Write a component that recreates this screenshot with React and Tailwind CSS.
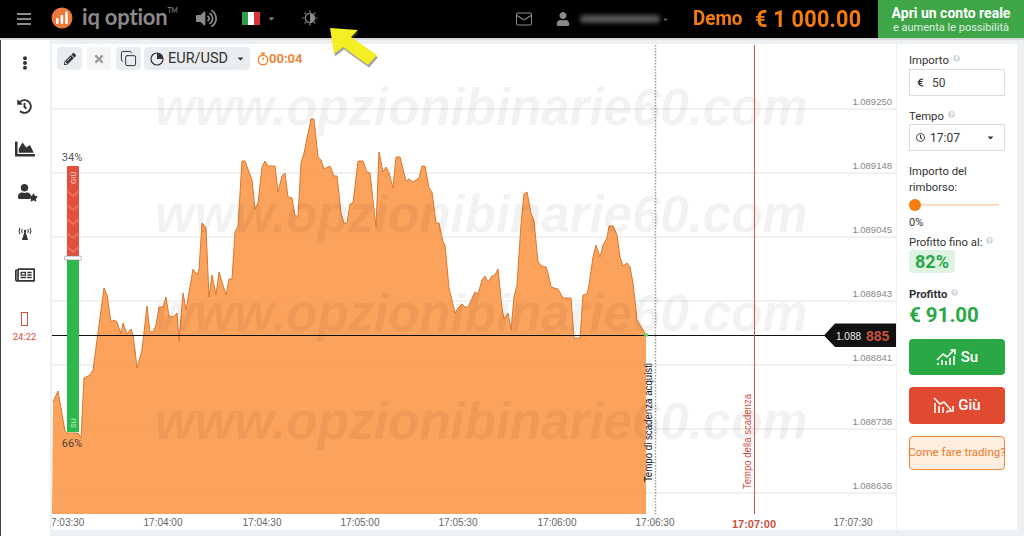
import React from "react";
import { Mail, Copy } from "lucide-react";
import {
  FaPencilAlt,
  FaTimes,
  FaUser,
  FaStar,
  FaHistory,
  FaChartArea,
  FaRegNewspaper,
  FaEllipsisV,
  FaRegClock,
  FaEuroSign,
  FaCaretDown,
  FaQuestionCircle,
  FaVolumeUp,
} from "react-icons/fa";

const PRICE_LINE =
  "53,402 58,391 65,431 67,433 78,433 81,438 84,378 90,375 93,370 97,340 100,318 104,288 107,295 111,322 114,320 117,322 121,334 123,323 127,334 131,329 133,335 135,350 137,368 142,350 147,306 150,332 153,332 156,325 159,307 163,307 166,297 169,316 173,317 177,313 179,341 183,293 186,310 193,269 197,275 199,270 202,223 206,228 209,297 212,275 216,295 219,272 222,282 226,295 229,279 232,279 235,232 238,226 242,161 245,161 252,180 255,209 258,203 262,167 265,161 268,166 275,166 278,192 282,176 285,173 288,197 292,198 295,216 298,216 301,163 304,153 311,119 314,119 318,157 321,160 324,169 330,166 334,176 337,176 341,213 344,223 347,223 350,204 353,203 358,161 363,161 367,172 370,173 376,227 379,152 383,172 386,167 389,173 393,188 396,157 400,157 406,181 409,179 413,182 419,178 422,166 425,166 429,188 432,192 436,223 439,223 443,242 445,245 449,288 455,313 459,307 462,304 465,307 468,307 475,292 478,294 482,280 485,276 488,282 492,276 495,275 498,269 502,308 504,319 508,313 511,330 514,297 517,285 521,224 524,194 527,192 531,213 534,221 538,262 542,266 546,267 548,273 551,287 554,288 558,289 563,298 571,298 574,338 580,338 583,295 587,294 589,285 593,257 596,245 600,257 603,245 607,238 609,226 613,226 617,235 620,257 623,266 627,263 630,267 633,283 637,320 646,335";

const GRID = [
  { y: 109, label: "1.089250" },
  { y: 173, label: "1.089148" },
  { y: 237, label: "1.089045" },
  { y: 301, label: "1.088943" },
  { y: 365, label: "1.088841" },
  { y: 429, label: "1.088738" },
  { y: 493, label: "1.088636" },
];

const TIMES = [
  { x: 163, label: "17:04:00" },
  { x: 262, label: "17:04:30" },
  { x: 360, label: "17:05:00" },
  { x: 458, label: "17:05:30" },
  { x: 557, label: "17:06:00" },
  { x: 655, label: "17:06:30" },
  { x: 853, label: "17:07:30" },
];

const WATERMARK_ROWS = [125, 232, 331, 439];

function Hint() {
  return <FaQuestionCircle className="inline-block w-[7px] h-[7px] text-gray-300 ml-1 -translate-y-[3px]" />;
}

function Header() {
  return (
    <div className="h-[38px] shrink-0 bg-black flex items-center relative">
      {/* menu */}
      <div className="ml-[17px] w-[14px] flex flex-col gap-[3px] shrink-0">
        <div className="h-[2px] bg-[#8c8c8c]"></div>
        <div className="h-[2px] bg-[#8c8c8c]"></div>
        <div className="h-[2px] bg-[#8c8c8c]"></div>
      </div>

      {/* logo */}
      <svg className="ml-[20px] -mt-[2px] shrink-0" width="22" height="22" viewBox="0 0 22 22">
        <circle cx="11" cy="11" r="10.5" fill="#ea7a3c" />
        <rect x="5" y="11" width="2.6" height="6" rx="1" fill="#fff" />
        <rect x="9.6" y="8" width="2.6" height="9" rx="1" fill="#fff" />
        <rect x="14.2" y="4.5" width="2.6" height="12.5" rx="1" fill="#fff" />
      </svg>
      <div className="ml-[9px] -mt-[5px] font-['Lato',sans-serif] font-bold text-[22px] leading-none tracking-[-0.2px] text-[#8a8a8a] flex w-[90px] shrink-0 whitespace-nowrap">
        iq option<span className="text-[7px] font-normal mt-[1px]">TM</span>
      </div>

      <FaVolumeUp className="ml-[24px] -mt-[2px] text-[#8a8a8a] shrink-0" size={21} />

      {/* flag */}
      <div className="ml-[25px] -mt-[2px] flex w-[18px] h-[13px] shrink-0">
        <div className="flex-1 bg-[#2f9e4f]"></div>
        <div className="flex-1 bg-white"></div>
        <div className="flex-1 bg-[#d8353b]"></div>
      </div>
      <FaCaretDown className="ml-[7px] -mt-[2px] text-[#8a8a8a] shrink-0" size={9} />

      {/* brightness */}
      <svg className="ml-[26px] -mt-[2px] shrink-0" width="16" height="16" viewBox="0 0 16 16">
        <circle cx="8" cy="8" r="4.6" fill="none" stroke="#8a8a8a" strokeWidth="1.2" />
        <path d="M8 3.4a4.6 4.6 0 0 1 0 9.2z" fill="#8a8a8a" />
        <path d="M8 0.5v2M8 13.5v2M2.6 2.6l1.4 1.4M12 12l1.4 1.4M13.4 2.6L12 4M4 12l-1.4 1.4M0.5 8h2M13.5 8h2" stroke="#8a8a8a" strokeWidth="1.2" />
      </svg>

      <div className="flex-1"></div>

      <Mail className="-mt-[1px] text-[#8a8a8a] shrink-0" size={18} strokeWidth={1.4} />
      <FaUser className="ml-[23px] -mt-[1px] text-[#8a8a8a] shrink-0" size={14} />
      <div className="ml-[10px] -mt-[1px] w-[80px] h-[8px] rounded-sm bg-[#555] blur-[2px] shrink-0"></div>
      <FaCaretDown className="ml-[2px] text-[#777] shrink-0" size={7} />

      <div className="ml-[24px] w-[50px] -mt-[1px] font-bold text-[#f47b0e] text-[21px] whitespace-nowrap origin-left scale-x-90 shrink-0">Demo</div>
      <div className="ml-[12px] w-[107px] -mt-[1px] font-bold text-[#f47b0e] text-[24px] tracking-[0.3px] whitespace-nowrap origin-left scale-x-90 shrink-0">€ 1 000.00</div>

      {/* conto reale */}
      <div className="ml-[16px] w-[146px] h-[38px] shrink-0 bg-[#3fa648] text-white flex flex-col items-center justify-center">
        <div className="text-[14px] font-bold leading-[16px] whitespace-nowrap">Apri un conto reale</div>
        <div className="text-[11px] leading-[13px] text-[#dff1e0] whitespace-nowrap">e aumenta le possibilità</div>
      </div>
    </div>
  );
}

function Rail() {
  return (
    <div className="w-[50px] shrink-0 bg-white border-l border-[#444] flex flex-col items-center text-[#333] pt-[16px] pr-[2px]">
      <FaEllipsisV size={14} />
      <FaHistory className="mt-[29px]" size={15} />
      <FaChartArea className="mt-[25px]" size={20} />
      <div className="mt-[25px] relative w-[20px] h-[18px] ml-[4px]">
        <FaUser size={15} />
        <FaStar className="absolute -right-[1px] bottom-0" size={9} />
      </div>
      <svg className="mt-[25px]" width="14" height="13" viewBox="0 0 14 13" fill="none" stroke="#333">
        <path d="M7 5L4.5 12.5h5z" fill="#333" />
        <circle cx="7" cy="4" r="1.2" fill="#333" stroke="none" />
        <path d="M4.3 2a3.6 3.6 0 0 0 0 4M9.7 2a3.6 3.6 0 0 1 0 4M2 0.8a6 6 0 0 0 0 6.4M12 0.8a6 6 0 0 1 0 6.4" strokeWidth="1" />
      </svg>
      <FaRegNewspaper className="mt-[25px]" size={20} />
      <div className="mt-[27px] w-[7px] h-[14px] border border-[#d9503f]"></div>
      <div className="mt-[6px] text-[9.5px] leading-none text-[#d9503f]">24:22</div>
    </div>
  );
}

function Toolbar() {
  return (
    <div className="absolute left-[5px] top-[3px] flex items-center h-[23px] text-[#333]">
      <div className="w-[25px] h-[23px] rounded-sm bg-[#e9edf0] flex items-center justify-center">
        <FaPencilAlt size={12} />
      </div>
      <div className="ml-[5px] w-[24px] h-[23px] rounded-sm bg-[#f3f5f6] flex items-center justify-center text-[#999]">
        <FaTimes size={12} />
      </div>
      <div className="ml-[5px] w-[25px] h-[23px] rounded-sm bg-[#e9edf0] flex items-center justify-center">
        <Copy size={17} strokeWidth={1.4} />
      </div>
      <div className="ml-[3px] w-[106px] h-[23px] rounded-sm bg-[#e9edf0] flex items-center pl-[6px]">
        <svg width="14" height="14" viewBox="0 0 14 14">
          <circle cx="7" cy="7" r="6" fill="none" stroke="#333" strokeWidth="1.2" />
          <path d="M7 7V1a6 6 0 0 1 6 6z" fill="#333" />
        </svg>
        <span className="ml-[4px] text-[14.5px]">EUR/USD</span>
        <FaCaretDown className="ml-[8px]" size={9} />
      </div>
      <div className="ml-[7px] flex items-center text-[#f0883a] font-bold text-[13px]">
        <svg width="12" height="14" viewBox="0 0 12 14">
          <circle cx="6" cy="8" r="4.8" fill="none" stroke="#f0883a" strokeWidth="1.4" />
          <path d="M4 1.2h4M6 1.2v2M6 8V5.5" stroke="#f0883a" strokeWidth="1.4" fill="none" />
        </svg>
        <span>00:04</span>
      </div>
    </div>
  );
}

function Chart() {
  return (
    <div className="w-[844px] h-full bg-white relative shrink-0 overflow-hidden">
      <svg className="absolute inset-0" width="844" height="486" viewBox="52 44 844 486">
        {GRID.map((g) => (
          <line key={g.y} x1="52" x2="897" y1={g.y} y2={g.y} stroke="#e3e3e3" strokeWidth="1" />
        ))}
        <polygon points={`52,514 ${PRICE_LINE} 646,514`} fill="#fb9a4e" fillOpacity="0.92" />
        <polyline points={PRICE_LINE} fill="none" stroke="#d9782f" strokeWidth="1" />
        {WATERMARK_ROWS.map((y) => (
          <text
            key={y}
            x="155"
            y={y}
            fontFamily="'Liberation Sans', sans-serif"
            fontWeight="bold"
            fontStyle="italic"
            fontSize="51"
            fill="#000"
            fillOpacity="0.05"
          >
            www.opzionibinarie60.com
          </text>
        ))}
        {GRID.map((g) => (
          <text key={g.label} x="892" y={g.y - 4} textAnchor="end" fontSize="9.5" fill="#888" fontFamily="'Liberation Sans', sans-serif">
            {g.label}
          </text>
        ))}

        {/* lines */}
        <line x1="52" x2="830" y1="335.5" y2="335.5" stroke="#111" strokeWidth="1" />
        <line x1="655.5" x2="655.5" y1="45" y2="514" stroke="#999" strokeWidth="1.5" strokeDasharray="1.5 1.5" />
        <line x1="754.5" x2="754.5" y1="45" y2="514" stroke="#d4553f" strokeWidth="1" />
        <circle cx="646" cy="335" r="2" fill="#54e05c" />

        {/* price tag */}
        <polygon points="824,335.5 835,323.5 897,323.5 897,347 835,347" fill="#111" />
        <text x="836" y="340" fontSize="10" fill="#eee" fontFamily="'Liberation Sans', sans-serif">1.088</text>
        <text x="866" y="341" fontSize="14" fontWeight="bold" fill="#c9503f" fontFamily="'Liberation Sans', sans-serif">885</text>

        {/* vertical labels */}
        <text transform="translate(652,482) rotate(-90)" textLength="119" lengthAdjust="spacingAndGlyphs" fontSize="11" fill="#111" fontFamily="'Liberation Sans', sans-serif">Tempo di scadenza acquisti</text>
        <text transform="translate(751,489) rotate(-90)" textLength="95" lengthAdjust="spacingAndGlyphs" fontSize="11" fill="#c9503f" fontFamily="'Liberation Sans', sans-serif">Tempo della scadenza</text>

        {/* time axis */}
        <text x="51" y="526" fontSize="10" fill="#666" fontFamily="'Liberation Sans', sans-serif">7:03:30</text>
        {TIMES.map((t) => (
          <text key={t.x} x={t.x} y="526" textAnchor="middle" fontSize="10" fill="#666" fontFamily="'Liberation Sans', sans-serif">
            {t.label}
          </text>
        ))}
        <text x="754" y="528" textAnchor="middle" fontSize="11" fontWeight="bold" fill="#c9503f" fontFamily="'Liberation Sans', sans-serif">17:07:00</text>

        {/* su / giu bar */}
        <text x="72" y="161" textAnchor="middle" fontSize="11" fill="#555">34%</text>
        <rect x="67" y="166" width="12" height="91" rx="1" fill="#e2503c" />
        <path d="M67 191l6 5 6-5M67 205l6 5 6-5M67 219l6 5 6-5M67 233l6 5 6-5M67 247l6 5 6-5" fill="none" stroke="#ea6f5d" strokeWidth="2" />
        <text transform="translate(75.5,184) rotate(-90)" fontSize="7" fill="#fbd7d0" fontFamily="'Liberation Sans', sans-serif">GIÙ</text>
        <rect x="67" y="259" width="12" height="173" fill="#2db84a" />
        <rect x="64.5" y="256" width="17" height="4" rx="1.5" fill="#fff" stroke="#888" strokeWidth="0.7" />
        <text transform="translate(75.5,428) rotate(-90)" fontSize="7" fill="#c9f3d2" fontFamily="'Liberation Sans', sans-serif">SU</text>
        <text x="72" y="447" textAnchor="middle" fontSize="11" fill="#554433">66%</text>
      </svg>
      <Toolbar />
    </div>
  );
}

function Panel() {
  return (
    <div className="w-[120px] h-full shrink-0 bg-white pl-[12px] pr-[12px] pt-[10px] text-[11.3px] text-[#333]">
      <div className="leading-[14px]">Importo<Hint /></div>
      <div className="mt-[1px] h-[27px] border border-[#ddd] flex items-center pl-[6px]">
        <FaEuroSign size={9} />
        <span className="ml-[7px] text-[#444] text-[12px]">50</span>
      </div>
      <div className="mt-[14px] leading-[14px]">Tempo<Hint /></div>
      <div className="h-[27px] border border-[#ddd] flex items-center pl-[6px] pr-[9px]">
        <FaRegClock size={9} />
        <span className="ml-[5px] flex-1 text-[12px]">17:07</span>
        <FaCaretDown size={9} />
      </div>
      <div className="mt-[13px] leading-[16px]">Importo del<br />rimborso:</div>
      <div className="mt-[3px] h-[12px] flex items-center relative">
        <div className="w-[12px] h-[12px] rounded-full bg-[#f47b0e] shrink-0"></div>
        <div className="h-[2px] w-[78px] bg-[#fcdcbf]"></div>
      </div>
      <div className="mt-[5px] leading-[14px] text-[11px]">0%</div>
      <div className="mt-[6px] leading-[14px]">Profitto fino al:<Hint /></div>
      <div className="w-[46px] h-[23px] rounded-sm bg-[#dff3e3] text-[#2aa845] font-bold text-[18px] flex items-center justify-center">82%</div>
      <div className="mt-[15px] leading-[14px] font-bold">Profitto<Hint /></div>
      <div className="mt-[1px] leading-[25px] text-[20.5px] font-bold text-[#2aa845] whitespace-nowrap">€ 91.00</div>
      <button className="mt-[11px] w-[96px] h-[36px] rounded-sm bg-[#2aa845] text-white text-[15px] font-medium flex items-center justify-center gap-[4px]">
        <svg width="21" height="17" viewBox="0 0 21 17" fill="none" stroke="#fff">
          <path d="M1 11l6-6 4 3 7-7" strokeWidth="1.6" />
          <path d="M14.5 1H19v4.5" strokeWidth="1.6" />
          <path d="M2 16v-2M6 16V11M10 16v-4M14 16V9M18 16V7" strokeWidth="1.6" />
        </svg>
        Su
      </button>
      <button className="mt-[12px] w-[96px] h-[37px] rounded-sm bg-[#df4a31] text-white text-[15px] font-medium flex items-center justify-center gap-[4px]">
        <svg width="21" height="17" viewBox="0 0 21 17" fill="none" stroke="#fff">
          <path d="M1 1l6 6 4-2 7 8" strokeWidth="1.6" />
          <path d="M14 14h6V9" strokeWidth="1.6" />
          <path d="M2 16V6M6 16V9M10 16v-6M14 16v-2" strokeWidth="1.6" />
        </svg>
        Giù
      </button>
      <div className="mt-[12px] w-[96px] h-[34px] rounded-sm border border-[#f0883a] bg-[#fdeee0] text-[#f0792a] text-[11.5px] flex items-center justify-center whitespace-nowrap">
        Come fare trading?
      </div>
    </div>
  );
}

export default function App() {
  return (
    <div className="w-[1024px] h-[536px] overflow-hidden relative flex flex-col bg-white font-['Roboto',sans-serif]">
      <Header />
      <div className="flex flex-1 min-h-0 border-t-2 border-[#d8dadc]">
        <Rail />
        <div className="flex-1 bg-[#edf0f2] flex gap-px pl-[2px] pt-[4px] pb-[6px] min-h-0">
          <Chart />
          <Panel />
        </div>
      </div>
      {/* arrow */}
      <svg className="absolute left-[325px] top-[24px]" width="60" height="46" viewBox="325 24 60 46">
        <polygon points="331,29 359,31 352,38 378,56 369,66 344,48 335,55" fill="#555" opacity="0.55" transform="translate(0,1.5)" />
        <polygon points="330,28 358,30 351,37 377,55 368,65 343,47 334,54" fill="#f4ee25" />
      </svg>
    </div>
  );
}
